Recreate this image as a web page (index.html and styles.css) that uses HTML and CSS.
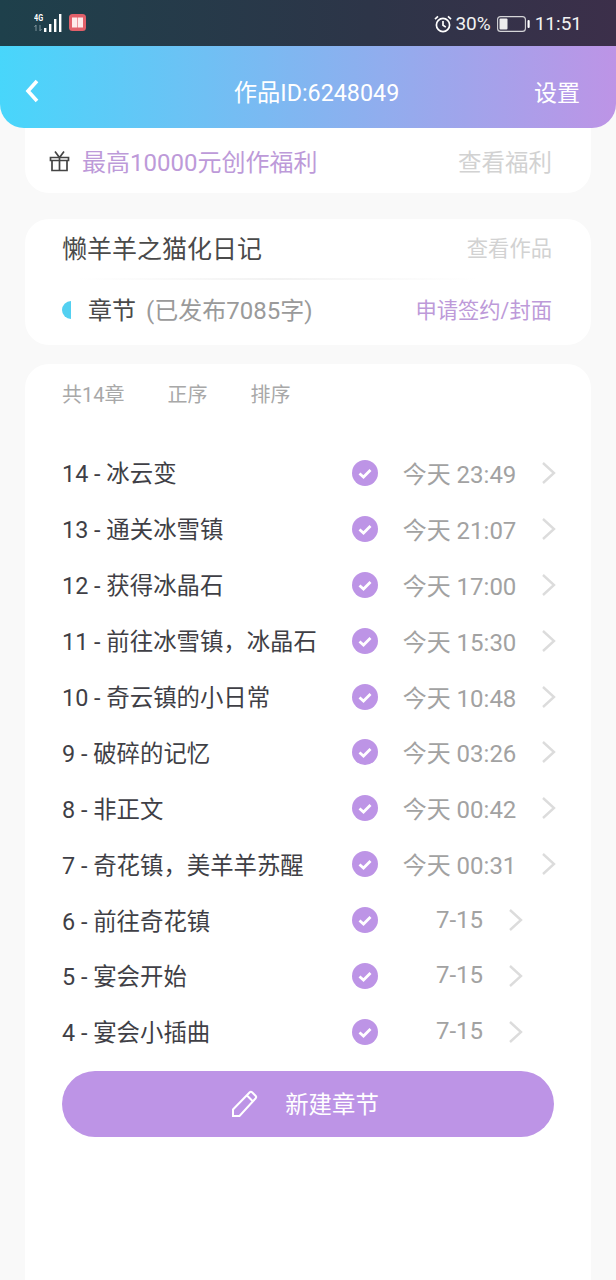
FILE: index.html
```html
<!DOCTYPE html>
<html>
<head>
  <title>作品ID:6248049</title>
  <link rel="stylesheet" href="styles.css">
</head>
<body>

<div id="statusbar">
  <div class="status-left">
    <div class="net">
      <span class="net-label">4G</span>
      <svg width="8" height="6" viewBox="0 0 8 6" class="net-arrows"><path d="M2 0v6M2 0L.5 2M6 6V0M6 6l1.5-2" stroke="#7d929a" stroke-width="1" fill="none"/></svg>
    </div>
    <svg width="19" height="18" viewBox="0 0 19 18" class="signal">
      <rect x="0" y="14" width="2.4" height="4" fill="#fff"/>
      <rect x="5" y="10" width="2.4" height="8" fill="#fff"/>
      <rect x="10" y="5" width="2.4" height="13" fill="#fff"/>
      <rect x="15" y="0" width="2.4" height="18" fill="#fff"/>
    </svg>
    <svg width="17" height="17" viewBox="0 0 17 17" class="book">
      <rect width="17" height="17" rx="3.5" fill="#e2606a"/>
      <path d="M3 3.500h5.200v10H3zM8.800 3.500H14v10H8.800z" fill="#fdeaea"/>
    </svg>
  </div>
  <div class="status-right">
    <svg width="18" height="18" viewBox="0 0 18 18" fill="none" stroke="#fff" stroke-width="1.7">
      <circle cx="9" cy="10" r="6.6"/>
      <path d="M9 6v4.3l2.8 1.8M1 4.2L4 1.4M17 4.2L14 1.4"/>
    </svg>
    <span class="pct">30%</span>
    <svg width="33" height="16" viewBox="0 0 33 16" class="battery">
      <rect x=".6" y=".6" width="27.8" height="14.8" rx="3" fill="none" stroke="#d5d5d8" stroke-width="1.1"/>
      <rect x="2.500" y="2.500" width="8" height="11" rx="1" fill="#ececec"/>
      <rect x="30.500" y="4" width="2.200" height="8" rx="1" fill="#fff"/>
    </svg>
    <span class="clock">11:51</span>
  </div>
</div>

<div id="header">
  <svg width="16" height="26" viewBox="0 0 16 26" class="back"><path d="M13 3L4 13l9 10" fill="none" stroke="#fff" stroke-width="3.6"/></svg>
  <div class="head-title">作品ID:6248049</div>
  <div class="head-action">设置</div>
</div>

<div class="card card-perks">
  <svg width="21" height="22" viewBox="0 0 21 22" fill="none" stroke="#444" stroke-width="1.7" class="gift">
    <path d="M1.500 7.500h18v3h-18zM3 10.500v10h15v-10M10.500 7.500v13M6 1.500l4.500 6 4.500-6"/>
  </svg>
  <span class="perks-text">最高10000元创作福利</span>
  <span class="perks-link">查看福利</span>
</div>

<div class="card card-book">
  <div class="book-row">
    <span class="book-name">懒羊羊之猫化日记</span>
    <span class="book-link">查看作品</span>
  </div>
  <div class="divider"></div>
  <div class="chapter-row">
    <span class="half-dot"></span>
    <span class="chapter-label">章节</span>
    <span class="chapter-count">(已发布7085字)</span>
    <span class="chapter-link">申请签约/封面</span>
  </div>
</div>

<div class="card card-list">
  <div class="list-tools">
    <span class="tool-count">共14章</span>
    <span>正序</span>
    <span>排序</span>
  </div>

  <div class="rows" id="rows"></div>

  <div class="new-btn">
    <svg width="28" height="28" viewBox="0 0 28 28" fill="none" stroke="#fff" stroke-width="2">
      <path d="M2 26v-6.500L18.500 2.500a2 2 0 0 1 2.800 0l3.200 3.200a2 2 0 0 1 0 2.800L8.500 26zM16 5.500l6 6"/>
    </svg>
    <span class="new-label">新建章节</span>
  </div>
</div>

<script>
  const chapters = [
    ["14 - 冰云变", "今天 23:49"],
    ["13 - 通关冰雪镇", "今天 21:07"],
    ["12 - 获得冰晶石", "今天 17:00"],
    ["11 - 前往冰雪镇，冰晶石", "今天 15:30"],
    ["10 - 奇云镇的小日常", "今天 10:48"],
    ["9 - 破碎的记忆", "今天 03:26"],
    ["8 - 非正文", "今天 00:42"],
    ["7 - 奇花镇，美羊羊苏醒", "今天 00:31"],
    ["6 - 前往奇花镇", "7-15"],
    ["5 - 宴会开始", "7-15"],
    ["4 - 宴会小插曲", "7-15"]
  ];
  const check = '<svg width="26" height="26" viewBox="0 0 26 26" class="check"><circle cx="13" cy="13" r="13" fill="#bd94e6"/><path d="M7.500 13.500l4 3.500 7-7" fill="none" stroke="#fff" stroke-width="2.800"/></svg>';
  const chevron = '<svg width="15" height="24" viewBox="0 0 15 24" class="chevron"><path d="M2 2l11 10L2 22" fill="none" stroke="#dcdcdc" stroke-width="2.400"/></svg>';
  const rows = document.getElementById('rows');
  chapters.forEach(function (c) {
    const row = document.createElement('div');
    row.className = 'row';
    row.innerHTML = '<span class="row-title">' + c[0] + '</span>' + check +
      '<div class="row-end"><span class="row-time">' + c[1] + '</span>' + chevron + '</div>';
    rows.appendChild(row);
  });
</script>

</body>
</html>
```

FILE: styles.css
```css
* {
  box-sizing: border-box;
}
html, body {
  margin: 0;
  padding: 0;
}
body {
  width: 616px;
  height: 1280px;
  overflow: hidden;
  background-color: #f9f9f9;
  font-family: Roboto, "Noto Sans CJK SC", sans-serif;
}
#statusbar {
  height: 46px;
  padding: 12px 34px 0 34px;
  display: flex;
  justify-content: space-between;
  align-items: flex-start;
  color: #fff;
  background: linear-gradient(90deg, #1e404b 0%, #2d3548 60%, #3c2f4a 100%);
}
.status-left {
  display: flex;
  align-items: flex-start;
  margin-top: 2px;
}
.net {
  width: 10px;
  display: flex;
  flex-direction: column;
  align-items: flex-start;
}
.net-label {
  font-size: 9px;
  line-height: 9px;
  font-weight: 700;
  transform: scaleX(.8);
  transform-origin: left;
}
.net-arrows {
  margin-top: 2px;
}
.book {
  margin-left: 6px;
}
.status-right {
  display: flex;
  align-items: center;
  font-size: 19px;
  line-height: 23px;
  color: #f2f2f2;
}
.pct {
  margin-left: 3px;
}
.battery {
  margin-left: 6px;
}
.clock {
  margin-left: 5px;
}
#header {
  height: 82px;
  padding: 8px 36px 0 24px;
  display: grid;
  grid-template-columns: 1fr auto 1fr;
  align-items: center;
  border-radius: 0 0 24px 24px;
  color: #fff;
  background: linear-gradient(90deg, #48d6fb 0%, #bd94e6 100%);
}
.back {
  display: block;
}
.head-title {
  font-size: 23.300px;
  padding-left: 29px;
}
.head-action {
  font-size: 23px;
  text-align: right;
}
.card {
  margin: 0 25px;
  background-color: #fff;
  border-radius: 24px;
}
.card-perks {
  height: 65px;
  padding: 0 39px 0 24px;
  display: flex;
  align-items: center;
  border-radius: 0 0 24px 24px;
}
.gift {
  flex: none;
}
.perks-text {
  margin-left: 12px;
  font-size: 24px;
  color: #bd9ad9;
}
.perks-link {
  margin-left: auto;
  font-size: 23.500px;
  color: #d2d2d2;
}
.card-book {
  margin-top: 26px;
  height: 126px;
  padding: 0 39px 0 37px;
}
.book-row {
  height: 59px;
  padding-bottom: 4px;
  display: flex;
  align-items: center;
  justify-content: space-between;
}
.book-name {
  font-size: 25px;
  color: #4a4a4a;
}
.book-link {
  font-size: 21.300px;
  color: #d2d2d2;
}
.divider {
  height: 2px;
  width: 400px;
  margin-left: 15px;
  background: linear-gradient(90deg, #fff 0%, #f2f2f2 50%, #fff 100%);
}
.chapter-row {
  height: 63px;
  padding-bottom: 3px;
  display: flex;
  align-items: center;
}
.half-dot {
  width: 9px;
  height: 18px;
  border-radius: 9px 0 0 9px;
  background-color: #53d0f1;
}
.chapter-label {
  margin-left: 17px;
  padding-bottom: 3px;
  font-size: 24px;
  color: #4a4a4a;
}
.chapter-count {
  margin-left: 10px;
  padding-bottom: 3px;
  font-size: 24px;
  color: #9a9a9a;
}
.chapter-link {
  margin-left: auto;
  padding-bottom: 3px;
  font-size: 21.300px;
  color: #bd9ad9;
}
.card-list {
  margin-top: 19px;
  height: 916px;
  padding: 0 37px;
  border-radius: 24px 24px 0 0;
}
.list-tools {
  height: 62px;
  padding-bottom: 3px;
  display: flex;
  align-items: center;
  gap: 43px;
  font-size: 20px;
  color: #a8a8a8;
}
.rows {
  margin-top: 19px;
}
.row {
  height: 55.900px;
  display: flex;
  align-items: center;
}
.row-title {
  flex: none;
  width: 290px;
  padding-bottom: 1px;
  font-size: 23.400px;
  color: #3f3f46;
  white-space: nowrap;
}
.check {
  flex: none;
}
.row-end {
  flex: none;
  width: 153px;
  margin-left: 25px;
  display: flex;
  align-items: center;
  justify-content: center;
  gap: 25px;
}
.row-time {
  padding-bottom: 1px;
  font-size: 24px;
  color: #a2a2a2;
  white-space: nowrap;
}
.chevron {
  flex: none;
}
.new-btn {
  height: 66px;
  width: 492px;
  margin-top: 11px;
  padding-right: 6px;
  display: flex;
  align-items: center;
  justify-content: center;
  gap: 26px;
  border-radius: 33px;
  font-size: 23.400px;
  color: #fff;
  background-color: #bd94e6;
}
.new-label {
  padding-bottom: 2px;
}
```
